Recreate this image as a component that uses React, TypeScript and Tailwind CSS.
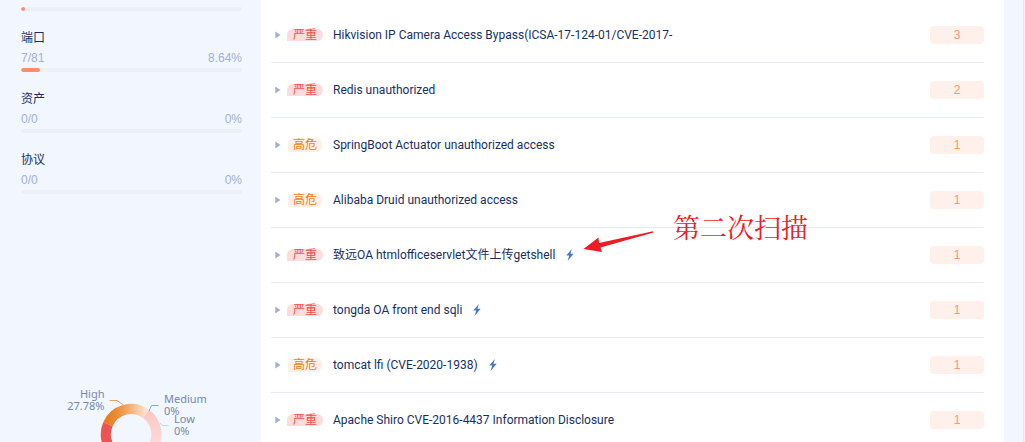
import React from 'react';

interface Stat {
  name?: string;
  value?: string;
  percent?: string;
  width: number;
}

interface Vuln {
  level: 'critical' | 'high';
  name: string;
  count: number;
  exp?: boolean;
}

const stats: Stat[] = [
  { name: '端口', value: '7/81', percent: '8.64%', width: 8.64 },
  { name: '资产', value: '0/0', percent: '0%', width: 0 },
  { name: '协议', value: '0/0', percent: '0%', width: 0 },
];

const vulns: Vuln[] = [
  { level: 'critical', name: 'Hikvision IP Camera Access Bypass(ICSA-17-124-01/CVE-2017-', count: 3 },
  { level: 'critical', name: 'Redis unauthorized', count: 2 },
  { level: 'high', name: 'SpringBoot Actuator unauthorized access', count: 1 },
  { level: 'high', name: 'Alibaba Druid unauthorized access', count: 1 },
  { level: 'critical', name: '致远OA htmlofficeservlet文件上传getshell', count: 1, exp: true },
  { level: 'critical', name: 'tongda OA front end sqli', count: 1, exp: true },
  { level: 'high', name: 'tomcat lfi (CVE-2020-1938)', count: 1, exp: true },
  { level: 'critical', name: 'Apache Shiro CVE-2016-4437 Information Disclosure', count: 1 },
];

const ProgressBar: React.FC<{ width: number }> = ({ width }) => (
  <div className="h-1 w-full rounded-full bg-[#ebeff7] overflow-hidden">
    <div className="h-full rounded-full bg-[#fa8f6b]" style={{ width: `${width}%` }} />
  </div>
);

const StatItem: React.FC<{ stat: Stat }> = ({ stat }) => (
  <div className="h-[61px] pt-[17px]">
    <div className="h-5 leading-5 text-[#17305f]">{stat.name}</div>
    <div className="flex h-5 justify-between leading-5 text-[#a3b0d0]">
      <span>{stat.value}</span>
      <span>{stat.percent}</span>
    </div>
    <ProgressBar width={stat.width} />
  </div>
);

const SeverityChart: React.FC = () => (
  <svg
    width="261"
    height="62"
    viewBox="0 380 261 62"
    className="block font-['Noto_Sans',sans-serif] text-[11px]"
  >
    <defs>
      <linearGradient id="high" x1="0" y1="0" x2="1" y2="0">
        <stop offset="0" stopColor="#ea7d1c" />
        <stop offset="0.35" stopColor="#ee9645" />
        <stop offset="1" stopColor="#fbe3cf" />
      </linearGradient>
      <linearGradient id="low" x1="0" y1="0" x2="0" y2="1">
        <stop offset="0" stopColor="#fbc8c6" />
        <stop offset="1" stopColor="#fddddc" />
      </linearGradient>
    </defs>
    <path d="M107.9 424.3A25.4 25.4 0 0 1 146 413.8" fill="none" stroke="url(#high)" strokeWidth="10.2" />
    <path d="M146 413.8A25.4 25.4 0 0 1 152.4 448" fill="none" stroke="url(#low)" strokeWidth="10.2" />
    <path d="M107.9 424.3A25.4 25.4 0 0 0 110.5 449" fill="none" stroke="#ef5350" strokeWidth="10.2" />
    <path d="M109.5 400.5H117L123.5 405" fill="none" stroke="#f0a159" />
    <path d="M149 411L151.5 405.5H158.5" fill="none" stroke="#83a8dc" />
    <path d="M160 423L162 425.5H168.5" fill="none" stroke="#b2e4d8" />
    <g fill="#7887a8">
      <text x="104.5" y="398" textAnchor="end">High</text>
      <text x="104.5" y="410" textAnchor="end">27.78%</text>
      <text x="164" y="403">Medium</text>
      <text x="164" y="415">0%</text>
      <text x="174" y="423">Low</text>
      <text x="174" y="435">0%</text>
    </g>
  </svg>
);

const VulnRow: React.FC<{ vuln: Vuln }> = ({ vuln }) => (
  <div className="flex h-[55px] shrink-0 items-center border-b border-[#e3eaf8] pl-1">
    <svg width="6" height="8" viewBox="0 0 6 8" className="shrink-0">
      <path d="M0.3 0.5L5.5 4L0.3 7.5Z" fill="#a3b0d0" />
    </svg>
    {vuln.level === 'critical' ? (
      <span className="ml-1.5 flex h-3 w-9 items-center justify-center rounded-t-[6px] rounded-br-[6px] bg-[#fddcdb] text-[#f0504c]">
        严重
      </span>
    ) : (
      <span className="ml-[7px] mr-px flex h-3.5 w-[34px] items-center justify-center rounded-t-[6px] rounded-br-[6px] bg-[#fff0e6] text-[#f27d16]">
        高危
      </span>
    )}
    <span className="ml-2.5 whitespace-nowrap font-['Roboto','Noto_Sans_CJK_SC',sans-serif] text-[#17305f]">
      {vuln.name}
    </span>
    {vuln.exp && (
      <svg width="8" height="12" viewBox="0 0 8 12" className="ml-[11px] shrink-0">
        <path d="M5.8 0L0.3 6.5H3.2L1.6 12L7.6 4.7H4.5Z" fill="#4678cc" />
      </svg>
    )}
    <span className="ml-auto flex h-[18px] w-[54px] items-center justify-center rounded-[4px] bg-[#fff0eb] text-[#f8976f]">
      {vuln.count}
    </span>
  </div>
);

const App: React.FC = () => {
  return (
    <div className="relative flex h-[442px] w-[1025px] overflow-hidden bg-[#f1f6ff] font-['Liberation_Sans','Noto_Sans_CJK_SC',sans-serif] text-xs">
      <aside className="flex w-[261px] shrink-0 flex-col justify-between">
        <div className="pl-[21px] pr-[19px] pt-[7px]">
          <ProgressBar width={1.8} />
          {stats.map((stat) => (
            <StatItem key={stat.name} stat={stat} />
          ))}
        </div>
        <SeverityChart />
      </aside>

      <main className="flex w-[743px] shrink-0 flex-col bg-white pl-2.5 pr-5 pt-2">
        {vulns.map((vuln) => (
          <VulnRow key={vuln.name} vuln={vuln} />
        ))}
      </main>
      <div className="ml-[19px] w-px bg-[#e0e7f6]" />

      {/* Annotation over the list */}
      <svg width="72" height="24" viewBox="0 0 72 24" className="absolute left-[583px] top-[230px]">
        <path d="M0.5 19L15.5 7.5L16 13L70 1.2L70.5 2.5L17.5 17.5L19 22Z" fill="#ed1c24" />
      </svg>
      <span className="absolute left-[673px] top-[211px] whitespace-nowrap font-['Noto_Serif_CJK_SC','Liberation_Serif','Noto_Sans_CJK_SC',serif] text-[27px] leading-8 text-[#ed1c24]">
        第二次扫描
      </span>
    </div>
  );
};

export default App;
